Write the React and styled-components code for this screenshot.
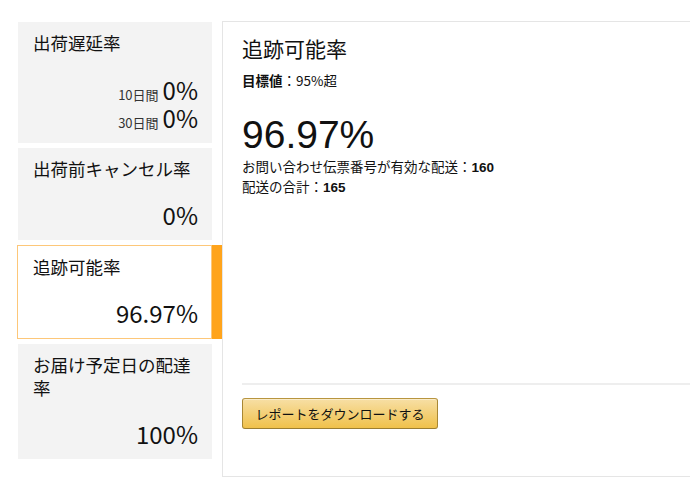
import React from "react";
import styled, { createGlobalStyle } from "styled-components";

const Global = createGlobalStyle`
  html, body { margin: 0; padding: 0; background: #fff; overflow: hidden; }
  body { font-family: "Noto Sans CJK JP", "Noto Sans", sans-serif; color: #111; }
  * { box-sizing: border-box; }
`;

const Page = styled.div`
  display: flex;
  align-items: flex-start;
  padding: 21px 0 0 18px;
  width: 720px;
`;

const Sidebar = styled.div`
  width: 204px;
  margin-top: 1px;
  display: flex;
  flex-direction: column;
  gap: 5px;
`;

const Row = styled.div`
  display: flex;
  align-items: stretch;
`;

const Card = styled.div`
  width: ${(p) => (p.$active ? "195px" : "194px")};
  margin-left: ${(p) => (p.$active ? "-1px" : "0")};
  background: ${(p) => (p.$active ? "#fff" : "#f3f3f3")};
  border: ${(p) => (p.$active ? "1px solid #fdc779" : "none")};
  padding: ${(p) => (p.$active ? "9px 13px 12px 15px" : "9px 14px 12px 15px")};
  display: flex;
  flex-direction: column;
`;

const Bar = styled.div`
  width: 10px;
  background: ${(p) => (p.$active ? "#ffa41c" : "transparent")};
`;

const CardTitle = styled.div`
  font-size: 17.5px;
  line-height: 23px;
  color: #111;
`;

const Values = styled.div`
  margin-top: 22px;
  text-align: right;
`;

const ValueLine = styled.div`
  font-size: 24px;
  line-height: ${(p) => (p.$dense ? "27.5px" : "26px")};
  height: ${(p) => (p.$dense ? "27.5px" : "26px")};
  color: #111;
  white-space: nowrap;
`;

const Period = styled.span`
  font-size: 13px;
  line-height: 1;
  color: #333;
  margin-right: 4px;
`;

const Panel = styled.div`
  width: 480px;
  height: 456px;
  border: 1px solid #e5e5e5;
  display: flex;
  flex-direction: column;
`;

const PanelBody = styled.div`
  flex: 1;
  padding: 12px 0 0 19px;
`;

const PanelTitle = styled.h2`
  margin: 0;
  font-weight: 400;
  font-size: 21px;
  line-height: 28px;
`;

const Target = styled.div`
  margin-top: 9px;
  font-size: 13.5px;
  line-height: 18px;
  b { font-weight: 700; }
`;

const BigValue = styled.div`
  margin-top: 24px;
  font-family: "Liberation Sans", Arial, sans-serif;
  font-size: 39px;
  line-height: 44px;
  color: #111;
`;

const Detail = styled.div`
  font-size: 13.5px;
  line-height: 19px;
  &:first-of-type { margin-top: 10px; }
  b { font-family: "Liberation Sans", Arial, sans-serif; font-weight: 700; font-size: 13.5px; }
`;

const Footer = styled.div`
  margin-left: 19px;
  border-top: 2px solid #eeeeee;
  padding: 13px 0 47px 0;
`;

const Button = styled.button`
  height: 31px;
  width: 196px;
  padding: 0 12px;
  border: 1px solid;
  border-color: #b8953f #a88734 #9c7e31;
  border-radius: 3px;
  background: linear-gradient(to bottom, #f7dfa5, #f0c14b);
  box-shadow: inset 0 1px 0 rgba(255, 255, 255, 0.4);
  font-family: "Noto Sans CJK JP", sans-serif;
  font-size: 13px;
  color: #111;
  cursor: pointer;
`;

const metrics = [
  { title: "出荷遅延率", lines: [["10日間", "0%"], ["30日間", "0%"]] },
  { title: "出荷前キャンセル率", lines: [[null, "0%"]] },
  { title: "追跡可能率", lines: [[null, "96.97%"]], active: true },
  { title: "お届け予定日の配達率", lines: [[null, "100%"]] },
];

export default function App() {
  return (
    <>
      <Global />
      <Page>
        <Sidebar>
          {metrics.map((m) => (
            <Row key={m.title}>
              <Card $active={m.active}>
                <CardTitle>{m.title}</CardTitle>
                <Values>
                  {m.lines.map(([period, value], i) => (
                    <ValueLine key={i} $dense={m.lines.length > 1}>
                      {period && <Period>{period}</Period>}
                      {value}
                    </ValueLine>
                  ))}
                </Values>
              </Card>
              <Bar $active={m.active} />
            </Row>
          ))}
        </Sidebar>
        <Panel>
          <PanelBody>
            <PanelTitle>追跡可能率</PanelTitle>
            <Target>
              <b>目標値</b>：95%超
            </Target>
            <BigValue>96.97%</BigValue>
            <Detail>
              お問い合わせ伝票番号が有効な配送：<b>160</b>
            </Detail>
            <Detail>
              配送の合計：<b>165</b>
            </Detail>
          </PanelBody>
          <Footer>
            <Button>レポートをダウンロードする</Button>
          </Footer>
        </Panel>
      </Page>
    </>
  );
}
